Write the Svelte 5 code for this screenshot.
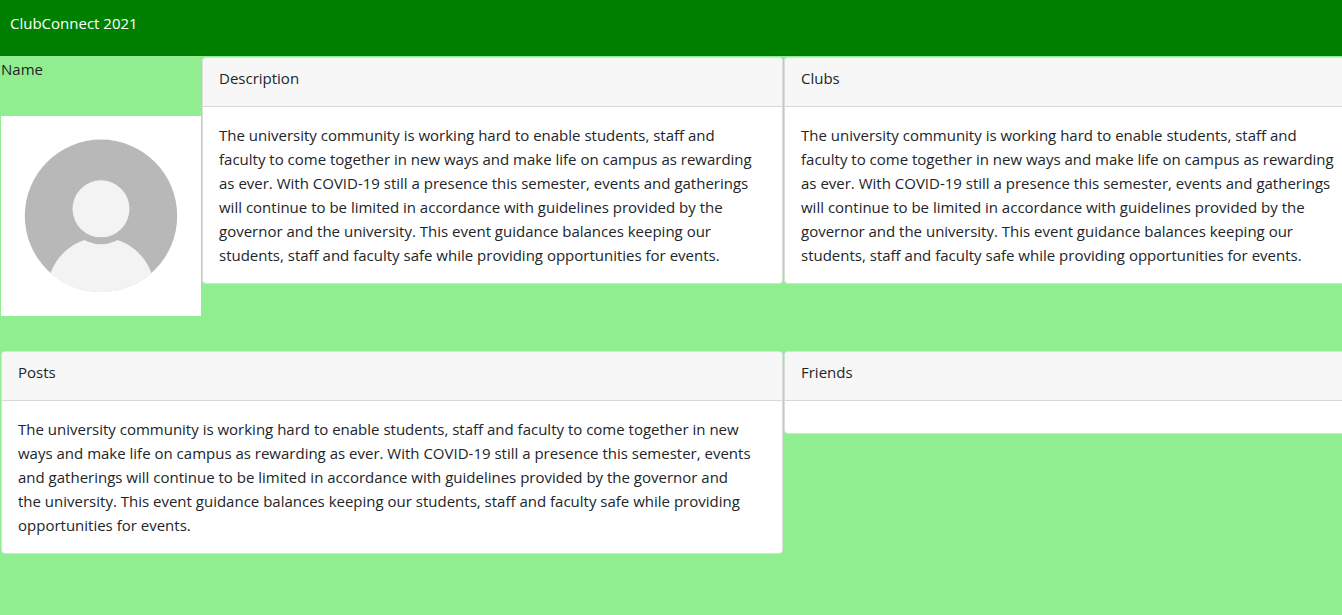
<script>
  const guidance =
    'The university community is working hard to enable students, staff and faculty to come together in new ways and make life on campus as rewarding as ever. With COVID-19 still a presence this semester, events and gatherings will continue to be limited in accordance with guidelines provided by the governor and the university. This event guidance balances keeping our students, staff and faculty safe while providing opportunities for events.';

  const cards = [
    { title: 'Description', text: guidance },
    { title: 'Clubs', text: guidance },
    { title: 'Posts', text: guidance, wide: true },
    { title: 'Friends', text: '' },
  ];
</script>

<header>ClubConnect 2021</header>

<main>
  <div class="board">
    <section class="profile">
      <p class="name">Name</p>
      <svg class="avatar" viewBox="0 0 200 200" role="img" aria-label="Profile picture">
        <defs>
          <clipPath id="disc"><circle cx="100" cy="99.8" r="76.5" /></clipPath>
        </defs>
        <rect width="200" height="200" fill="#fff" />
        <circle cx="100" cy="99.8" r="76.2" fill="#b8b8b8" />
        <g clip-path="url(#disc)">
          <circle cx="100" cy="175" r="53.5" fill="#f3f3f3" />
          <circle cx="100" cy="92.8" r="35.5" fill="#b8b8b8" />
          <circle cx="100" cy="92.8" r="28.5" fill="#f3f3f3" />
        </g>
      </svg>
    </section>

    {#each cards as card}
      <article class="card" class:wide={card.wide}>
        <h2>{card.title}</h2>
        <p class="body">{card.text}</p>
      </article>
    {/each}
  </div>
</main>

<style>
  :global(body) {
    margin: 0;
    background: lightgreen;
    color: #212529;
    font: 15px/24px 'Segoe UI', 'Open Sans', 'Noto Sans', sans-serif;
  }

  header {
    padding: 11px 10px 21px;
    background: green;
    color: #fff;
  }

  main {
    overflow: hidden;
  }

  /* The board runs slightly past the right edge of the window. */
  .board {
    display: grid;
    grid-template-columns: 200px 1fr 1fr;
    align-items: start;
    gap: 1px;
    margin-right: -24px;
    padding: 1px;
  }

  .profile {
    padding-bottom: 34px;
  }

  .name {
    margin: 0 0 35px;
  }

  .avatar {
    display: block;
    width: 200px;
    height: 200px;
  }

  .card {
    overflow: hidden;
    border: 1px solid #d9dfd9;
    border-radius: 4px;
    background: #fff;
  }

  .wide {
    grid-column: span 2;
  }

  h2 {
    margin: 0;
    padding: 8px 16px 16px;
    border-bottom: 1px solid #d8d8d8;
    background: #f7f7f7;
    font-size: 15px;
    font-weight: 400;
  }

  .body {
    margin: 0;
    padding: 16px 28px 16px 16px;
  }
</style>
